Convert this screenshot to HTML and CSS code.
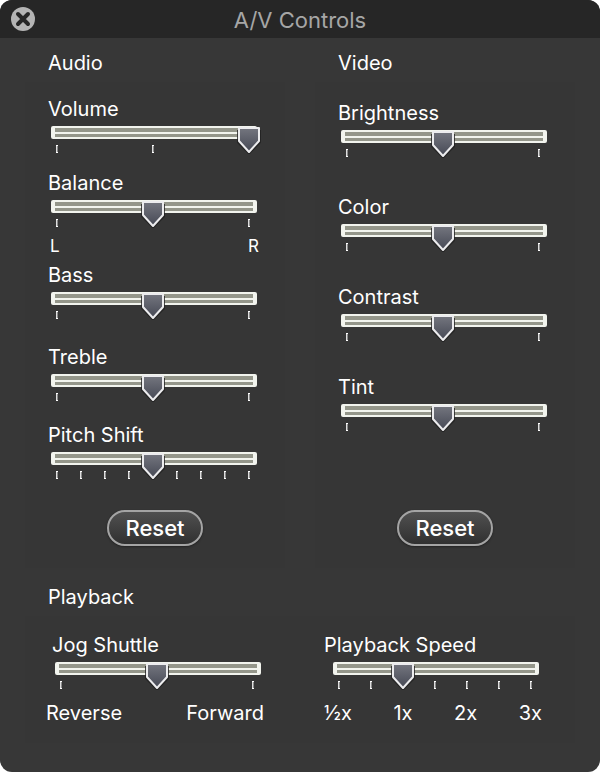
FILE: index.html
```html
<!DOCTYPE html>
<html lang="en">
<head>
  <meta charset="UTF-8">
  <meta name="viewport" content="width=device-width, initial-scale=1">
  <title>A/V Controls</title>
  <link rel="stylesheet" href="styles.css">
</head>
<body>

<div class="window">
  <header class="titlebar">
    <button class="close" type="button" aria-label="Close">
      <svg width="24" height="24" viewBox="0 0 24 24">
        <circle cx="12" cy="12" r="12" fill="#b4b4b4"/>
        <path d="M7 7l10 10M17 7L7 17" stroke="#262626" stroke-width="4" stroke-linecap="round"/>
      </svg>
    </button>
    <h1>A/V Controls</h1>
  </header>

  <main>
    <div class="columns">
      <section>
        <h2>Audio</h2>
        <div class="panel audio">
          <div class="control">
            <label for="volume">Volume</label>
            <div class="slider">
              <div class="ticks"><i></i><i></i><i></i></div>
              <input type="range" id="volume" min="0" max="100" value="100">
            </div>
          </div>
          <div class="control">
            <label for="balance">Balance</label>
            <div class="slider">
              <div class="ticks"><i></i><i></i></div>
              <input type="range" id="balance" min="-50" max="50" value="0">
            </div>
            <div class="ends"><span>L</span><span>R</span></div>
          </div>
          <div class="control">
            <label for="bass">Bass</label>
            <div class="slider">
              <div class="ticks"><i></i><i></i></div>
              <input type="range" id="bass" min="-50" max="50" value="0">
            </div>
          </div>
          <div class="control">
            <label for="treble">Treble</label>
            <div class="slider">
              <div class="ticks"><i></i><i></i></div>
              <input type="range" id="treble" min="-50" max="50" value="0">
            </div>
          </div>
          <div class="control">
            <label for="pitch">Pitch Shift</label>
            <div class="slider">
              <div class="ticks"><i></i><i></i><i></i><i></i><i></i><i></i><i></i><i></i><i></i></div>
              <input type="range" id="pitch" min="-4" max="4" value="0">
            </div>
          </div>
          <button class="reset" type="button">Reset</button>
        </div>
      </section>

      <section>
        <h2>Video</h2>
        <div class="panel video">
          <div class="control">
            <label for="brightness">Brightness</label>
            <div class="slider">
              <div class="ticks"><i></i><i></i></div>
              <input type="range" id="brightness" min="-50" max="50" value="0">
            </div>
          </div>
          <div class="control">
            <label for="color">Color</label>
            <div class="slider">
              <div class="ticks"><i></i><i></i></div>
              <input type="range" id="color" min="-50" max="50" value="0">
            </div>
          </div>
          <div class="control">
            <label for="contrast">Contrast</label>
            <div class="slider">
              <div class="ticks"><i></i><i></i></div>
              <input type="range" id="contrast" min="-50" max="50" value="0">
            </div>
          </div>
          <div class="control">
            <label for="tint">Tint</label>
            <div class="slider">
              <div class="ticks"><i></i><i></i></div>
              <input type="range" id="tint" min="-50" max="50" value="0">
            </div>
          </div>
          <button class="reset" type="button">Reset</button>
        </div>
      </section>
    </div>

    <section>
      <h2>Playback</h2>
      <div class="panel playback">
        <div class="jog">
          <label for="jog">Jog Shuttle</label>
          <div class="slider">
            <div class="ticks"><i></i><i></i></div>
            <input type="range" id="jog" min="-50" max="50" value="0">
          </div>
          <div class="marks"><span>Reverse</span><span>Forward</span></div>
        </div>
        <div class="speed">
          <label for="speed">Playback Speed</label>
          <div class="slider">
            <div class="ticks"><i></i><i></i><i></i><i></i><i></i><i></i><i></i></div>
            <input type="range" id="speed" min="0" max="6" value="2">
          </div>
          <div class="marks"><span>½x</span><span>1x</span><span>2x</span><span>3x</span></div>
        </div>
      </div>
    </section>
  </main>
</div>

</body>
</html>
```
FILE: styles.css
```css
*,
*::before {
  box-sizing: border-box;
}

body {
  margin: 0;
  background: #fff;
  color: #fff;
  font-family: Inter, "Liberation Sans", sans-serif;
  font-size: 20px;
  line-height: 24px;
}

.window {
  min-height: 100vh;
  background: #373737;
  border-radius: 12px;
  overflow: hidden;
}

/* title bar */
.titlebar {
  display: grid;
  grid-template-columns: 24px 1fr 24px;
  align-items: center;
  height: 38px;
  padding: 0 11px;
  background: #262626;
}

.titlebar h1 {
  margin: 0;
  padding-top: 2px;
  color: #a6a6a6;
  font-size: 22px;
  font-weight: 400;
  text-align: center;
}

.close {
  width: 24px;
  height: 24px;
  padding: 0;
  border: none;
  background: none;
}

.close svg {
  display: block;
}

/* sections */
main {
  padding: 13px 25px 29px;
}

h2 {
  margin: 0 0 7px;
  padding-left: 23px;
  font-size: 20px;
  font-weight: 400;
}

.columns {
  display: grid;
  grid-template-columns: 1fr 1fr;
  gap: 30px;
  margin-bottom: 17px;
}

.columns section {
  display: flex;
  flex-direction: column;
}

.panel {
  display: grid;
  background: #363636;
}

.audio {
  grid-template-rows: 74px 92px 82px 78px 87px 36px;
  padding: 15px 0 22px;
}

.video {
  grid-template-rows: 94px 90px 90px 135px 36px;
  padding: 19px 0 22px;
}

.control {
  padding: 0 24px 0 20px;
}

label {
  display: block;
  margin-bottom: 5px;
  padding-left: 3px;
}

/* sliders */
.slider {
  display: grid;
}

.slider > * {
  grid-area: 1 / 1;
}

.ticks {
  display: flex;
  justify-content: space-between;
  align-self: end;
  padding: 0 11px 1px;
}

.ticks i {
  width: 2px;
  height: 8px;
  border: solid #fff;
  border-width: 1px 0;
  background: linear-gradient(90deg, #dcdcdc 1px, #8c8c8c 1px);
}

input[type="range"] {
  -webkit-appearance: none;
  appearance: none;
  position: relative;
  width: 100%;
  height: 28px;
  margin: 0;
  background: none;
}

input[type="range"]::before {
  content: "";
  position: absolute;
  top: 0;
  left: 6px;
  right: 4px;
  height: 13px;
  border: solid #f2f4ee;
  border-width: 2px 4px;
  border-radius: 2px;
  background: linear-gradient(#94968a 4px, #f2f4ee 4px, #f2f4ee 6px, #94968a 6px);
}

input[type="range"]::-webkit-slider-thumb {
  -webkit-appearance: none;
  position: relative;
  width: 24px;
  height: 28px;
  background: url("data:image/svg+xml,%3Csvg xmlns='http://www.w3.org/2000/svg' width='24' height='28'%3E%3Cdefs%3E%3ClinearGradient id='g' x2='0' y2='1'%3E%3Cstop stop-color='%2374767f'/%3E%3Cstop offset='1' stop-color='%23454854'/%3E%3C/linearGradient%3E%3C/defs%3E%3Cpath d='M2 4V16L12 26L22 16V4' fill='none' stroke='%23202020' stroke-opacity='.8' stroke-width='4'/%3E%3Cpath d='M2 2H22V15L12 26L2 15Z' fill='url(%23g)' stroke='%23ececee' stroke-width='2' stroke-linejoin='round'/%3E%3C/svg%3E");
}

.ends {
  display: flex;
  justify-content: space-between;
  margin-top: 8px;
  padding: 0 2px 0 5px;
  font-size: 17px;
  line-height: 20px;
}

/* buttons */
.reset {
  justify-self: center;
  width: 96px;
  height: 36px;
  padding: 0;
  border: 2px solid #a4a4a4;
  border-radius: 18px;
  background: linear-gradient(#505050, #303030);
  box-shadow: 0 1px 2px #222;
  color: #fff;
  font-family: inherit;
  font-size: 22px;
  font-weight: 500;
}

/* playback */
.playback {
  grid-template-columns: 1fr 1fr;
  gap: 62px;
  padding: 17px 32px 18px 24px;
}

.marks {
  display: flex;
  justify-content: space-between;
  margin: 11px 1px 0 -3px;
}

.speed label {
  margin-left: -6px;
}
```
